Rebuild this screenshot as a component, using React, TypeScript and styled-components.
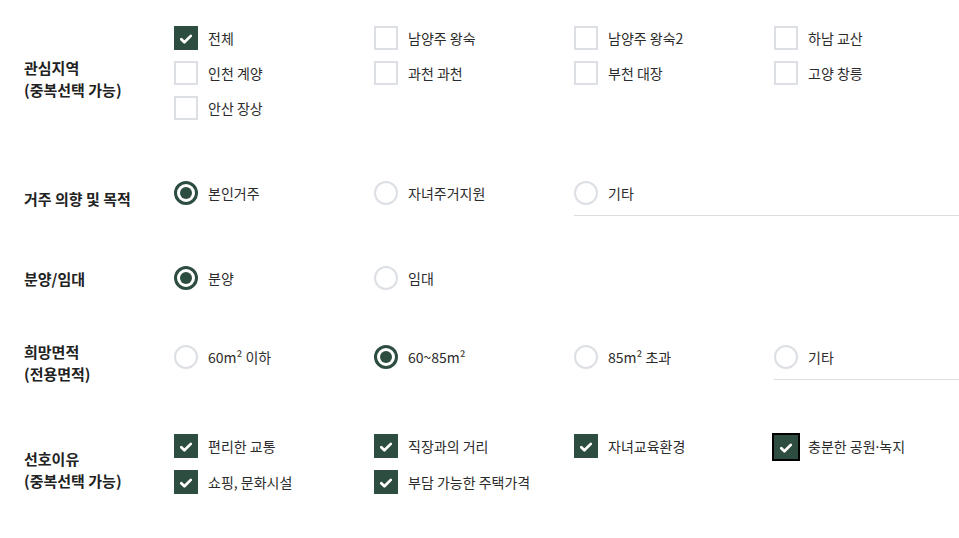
import React from "react";
import styled, { createGlobalStyle, css } from "styled-components";

const GREEN = "#2d4d40";
const LINE = "#dcdfe3";

const Global = createGlobalStyle`
  html, body { margin: 0; padding: 0; background: #fff; }
  body { font-family: "Noto Sans CJK KR", "Noto Sans", sans-serif; color: #333; }
  * { box-sizing: border-box; }
`;

const Form = styled.div`
  width: 959px;
  padding: 0 0 0 24px;
`;

const Row = styled.div<{ $pb?: number }>`
  display: flex;
  align-items: center;
  padding: 26px 0 ${(p) => p.$pb ?? 24}px;
`;

const Label = styled.div`
  width: 150px;
  flex: none;
  margin: -5px 0;
  padding-top: 1px;
  font-size: 15px;
  font-weight: 700;
  line-height: 22px;
  color: #222;
`;

const Options = styled.div`
  flex: 1;
  display: grid;
  grid-template-columns: 200px 200px 200px 1fr;
  align-items: start;
`;

const Item = styled.label<{ $multi?: boolean; $line?: boolean; $span?: number }>`
  display: flex;
  align-items: center;
  gap: 10px;
  min-height: 24px;
  font-size: 14px;
  color: #2b2b2b;
  line-height: 24px;
  cursor: pointer;
  ${(p) => p.$multi && css`margin-bottom: 11px;`}
  ${(p) =>
    p.$line &&
    css`
      padding-bottom: 10px;
      border-bottom: 1px solid #dddddd;
    `}
  ${(p) => p.$span && css`grid-column: span ${p.$span};`}
`;

const Box = styled.span<{ $checked?: boolean; $focus?: boolean }>`
  width: 24px;
  height: 24px;
  flex: none;
  display: flex;
  align-items: center;
  justify-content: center;
  border: 2px solid ${(p) => (p.$checked ? GREEN : LINE)};
  background: ${(p) => (p.$checked ? GREEN : "#fff")};
  ${(p) => p.$focus && css`outline: 2px solid #000;`}
`;

const Circle = styled.span<{ $checked?: boolean }>`
  width: 24px;
  height: 24px;
  flex: none;
  border-radius: 50%;
  display: flex;
  align-items: center;
  justify-content: center;
  border: ${(p) => (p.$checked ? `3px solid ${GREEN}` : `2px solid ${LINE}`)};
  background: #fff;
  &::after {
    content: "";
    display: ${(p) => (p.$checked ? "block" : "none")};
    width: 12px;
    height: 12px;
    border-radius: 50%;
    background: ${GREEN};
  }
`;

const Dot = styled.span`
  font-family: "Noto Sans", sans-serif;
`;

const Check = () => (
  <svg width="24" height="24" viewBox="0 0 24 24" style={{ margin: -2 }}>
    <path
      d="M7.3 13.2 L10.4 16.3 L16.8 9.9"
      fill="none"
      stroke="#fff"
      strokeWidth="2.7"
      strokeLinecap="round"
      strokeLinejoin="round"
    />
  </svg>
);

type CB = { text: React.ReactNode; checked?: boolean; focus?: boolean };
type RB = { text: React.ReactNode; checked?: boolean; line?: boolean; span?: number };

const CheckItem = ({ text, checked, focus }: CB) => (
  <Item $multi>
    <Box $checked={checked} $focus={focus}>{checked && <Check />}</Box>
    <span>{text}</span>
  </Item>
);

const RadioItem = ({ text, checked, line, span }: RB) => (
  <Item $line={line} $span={span}>
    <Circle $checked={checked} />
    <span>{text}</span>
  </Item>
);

const regions: CB[] = [
  { text: "전체", checked: true },
  { text: "남양주 왕숙" },
  { text: "남양주 왕숙2" },
  { text: "하남 교산" },
  { text: "인천 계양" },
  { text: "과천 과천" },
  { text: "부천 대장" },
  { text: "고양 창릉" },
  { text: "안산 장상" },
];

const reasons: CB[] = [
  { text: "편리한 교통", checked: true },
  { text: "직장과의 거리", checked: true },
  { text: "자녀교육환경", checked: true },
  {
    text: (
      <>
        충분한 공원<Dot>·</Dot>녹지
      </>
    ),
    checked: true,
    focus: true,
  },
  { text: "쇼핑, 문화시설", checked: true },
  { text: "부담 가능한 주택가격", checked: true },
];

export default function App() {
  return (
    <>
      <Global />
      <Form>
        <Row>
          <Label>
            관심지역
            <br />
            (중복선택 가능)
          </Label>
          <Options>
            {regions.map((r, i) => (
              <CheckItem key={i} {...r} />
            ))}
          </Options>
        </Row>
        <Row>
          <Label>거주 의향 및 목적</Label>
          <Options>
            <RadioItem text="본인거주" checked />
            <RadioItem text="자녀주거지원" />
            <RadioItem text="기타" line span={2} />
          </Options>
        </Row>
        <Row $pb={29}>
          <Label>분양/임대</Label>
          <Options>
            <RadioItem text="분양" checked />
            <RadioItem text="임대" />
          </Options>
        </Row>
        <Row $pb={28}>
          <Label>
            희망면적
            <br />
            (전용면적)
          </Label>
          <Options>
            <RadioItem text="60m² 이하" />
            <RadioItem text="60~85m²" checked />
            <RadioItem text="85m² 초과" />
            <RadioItem text="기타" line />
          </Options>
        </Row>
        <Row>
          <Label>
            선호이유
            <br />
            (중복선택 가능)
          </Label>
          <Options>
            {reasons.map((r, i) => (
              <CheckItem key={i} {...r} />
            ))}
          </Options>
        </Row>
      </Form>
    </>
  );
}
